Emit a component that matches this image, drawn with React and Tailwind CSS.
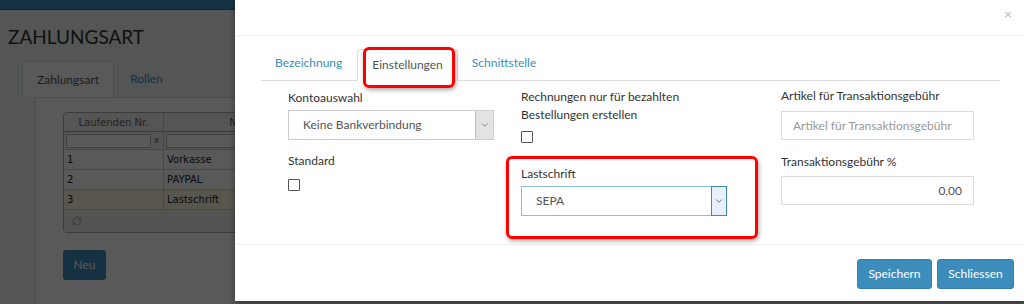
import { ChevronDown, RefreshCw } from 'lucide-react';

const font = { fontFamily: 'Lato, "Noto Sans", sans-serif' };

function Checkbox() {
    return <div className="w-[12px] h-[12px] border border-[#555] bg-white rounded-[1px]"></div>;
}

function BackgroundPage() {
    return (
        <div className="absolute inset-0 bg-[#f0f2f4]" style={font}>
            <div className="h-[10px] bg-[#3c8dbc] border-b border-[#30739b]"></div>
            <h1 className="pl-[8px] pt-[15px] text-[19px] leading-[24px] text-[#333]">ZAHLUNGSART</h1>
            <div className="flex items-end pl-[22px] mt-[12px] h-[36px]">
                <div className="h-[36px] px-[14px] flex items-center bg-white border border-[#ddd] border-b-0 rounded-t-[3px] text-[12px] text-[#555]">Zahlungsart</div>
                <div className="h-[36px] px-[16px] flex items-center text-[12px] text-[#3c8dbc]">Rollen</div>
            </div>
            <div className="ml-[35px] bg-white border-l border-t border-[#ddd] h-[220px] pl-[27px] pt-[14px]" style={{ fontFamily: '"DejaVu Sans", sans-serif' }}>
                <div className="w-[260px] border border-[#aaa] rounded-[4px] overflow-hidden text-[10px] text-[#222]">
                    <div className="grid grid-cols-[100px_160px] h-[19px] bg-[#f2f2f2] border-b border-[#aaa] text-[#666]">
                        <div className="flex items-center justify-center border-r border-[#ccc]">Laufenden Nr.</div>
                        <div className="flex items-center justify-center">Name</div>
                    </div>
                    <div className="grid grid-cols-[100px_160px] h-[18px] bg-[#f2f2f2] border-b border-[#ccc]">
                        <div className="flex items-center px-[2px] gap-[3px] border-r border-[#ccc]">
                            <div className="w-[85px] h-[14px] bg-white border border-[#bbb]"></div>
                            <span className="text-[9px] text-[#555]">x</span>
                        </div>
                        <div className="flex items-center px-[2px]"><div className="w-[150px] h-[14px] bg-white border border-[#bbb]"></div></div>
                    </div>
                    {[['1', 'Vorkasse'], ['2', 'PAYPAL'], ['3', 'Lastschrift']].map(([n, name], i) => (
                        <div key={n} className={`grid grid-cols-[100px_160px] h-[20px] border-b ${i === 2 ? 'bg-[#fdf6dc] border-[#f1d58a]' : 'bg-white border-[#ccc]'}`}>
                            <div className="flex items-center px-[3px] border-r border-[#ccc]">{n}</div>
                            <div className="flex items-center px-[3px]">{name}</div>
                        </div>
                    ))}
                    <div className="h-[22px] bg-[#eeeeee] flex items-center pl-[8px] text-[#999]">
                        <RefreshCw size={10} />
                    </div>
                </div>
                <button className="mt-[17px] w-[43px] h-[30px] bg-[#3c8dbc] rounded-[3px] text-white text-[12px]" style={font}>Neu</button>
            </div>
            <div className="absolute inset-0 bg-black/[0.65]"></div>
        </div>
    );
}

function Modal() {
    return (
        <div className="absolute left-[235px] top-0 w-[789px] h-[301px] bg-white text-[12px] text-[#333] shadow-[0_3px_6px_rgba(0,0,0,0.4)]" style={font}>
            <div className="h-[36px] border-b border-[#f0f0f0] flex justify-end items-start pr-[12px] pt-[7px]">
                <span className="text-[14px] leading-[14px] font-bold text-[#c8c8c8]">×</span>
            </div>
            <div className="h-[208px] pt-[11px]">
                <div className="ml-[26px] mr-[24px] h-[34px] border-b border-[#ddd] flex items-end">
                    <div className="h-[34px] pl-[14px] pr-[13px] flex items-center text-[#3c8dbc]">Bezeichnung</div>
                    <div className="ml-[2px] h-[32px] px-[14px] flex items-center bg-white border border-[#ddd] border-b-white -mb-px rounded-t-[3px] text-[#555]">Einstellungen</div>
                    <div className="h-[34px] px-[14px] flex items-center text-[#3c8dbc]">Schnittstelle</div>
                </div>
                <div className="ml-[53px] grid grid-cols-[233px_260px_193px]">
                    <div className="flex flex-col">
                        <div className="mt-[8px] leading-[18px]">Kontoauswahl</div>
                        <div className="mt-[3px] w-[206px] h-[30px] border border-[#ccc] flex">
                            <div className="flex-1 flex items-center pl-[14px] text-[#555]">Keine Bankverbindung</div>
                            <div className="w-[18px] bg-[#e3e3e3] border-l border-[#bbb] flex items-center justify-center text-[#777]">
                                <ChevronDown size={10} strokeWidth={2} />
                            </div>
                        </div>
                        <div className="mt-[12px] leading-[18px]">Standard</div>
                        <div className="mt-[9px]"><Checkbox /></div>
                    </div>
                    <div className="flex flex-col">
                        <div className="mt-[7px] leading-[18px]">Rechnungen nur für bezahlten<br />Bestellungen erstellen</div>
                        <div className="mt-[7px]"><Checkbox /></div>
                        <div className="mt-[22px] leading-[18px]">Lastschrift</div>
                        <div className="mt-[3px] w-[206px] h-[30px] border border-[#8dbde6] flex">
                            <div className="flex-1 flex items-center pl-[14px] text-[#555]">SEPA</div>
                            <div className="w-[16px] bg-[#e8f1fb] border border-[#3f86c6] -m-px flex items-center justify-center text-[#555]">
                                <ChevronDown size={10} strokeWidth={2} />
                            </div>
                        </div>
                    </div>
                    <div className="flex flex-col">
                        <div className="mt-[6px] leading-[18px]">Artikel für Transaktionsgebühr</div>
                        <div className="mt-[6px] w-[193px] h-[29px] border border-[#ddd] flex items-center pl-[11px] text-[#999]">Artikel für Transaktionsgebühr</div>
                        <div className="mt-[13px] leading-[18px]">Transaktionsgebühr %</div>
                        <div className="mt-[5px] w-[193px] h-[29px] border border-[#ddd] flex items-center justify-end pr-[11px] text-[#555]">0,00</div>
                    </div>
                </div>
            </div>
            <div className="border-t border-[#f0f0f0] flex justify-end gap-[5px] pt-[14px] pr-[10px]">
                <button className="h-[30px] w-[75px] bg-[#3c8dbc] border border-[#3580ad] rounded-[3px] text-white">Speichern</button>
                <button className="h-[30px] w-[77px] bg-[#3c8dbc] border border-[#3580ad] rounded-[3px] text-white">Schliessen</button>
            </div>
            <div className="absolute left-[128px] top-[47px] w-[92px] h-[41px] border-[3px] border-[#f00] rounded-[6px] shadow-[1px_2px_4px_rgba(0,0,0,0.35)]"></div>
            <div className="absolute left-[271px] top-[156px] w-[252px] h-[83px] border-[3px] border-[#f00] rounded-[6px] shadow-[1px_2px_4px_rgba(0,0,0,0.35)]"></div>
        </div>
    );
}

export default function App() {
    return (
        <div className="relative w-[1024px] h-[304px] overflow-hidden bg-[#3a3a3a]">
            <BackgroundPage />
            <Modal />
        </div>
    );
}
